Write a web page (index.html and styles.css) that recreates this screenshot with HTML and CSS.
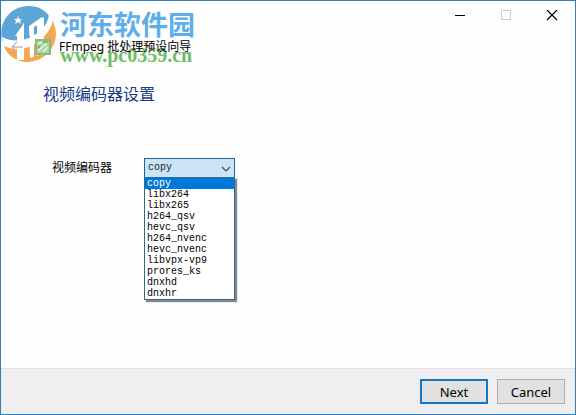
FILE: index.html
```html
<!DOCTYPE html>
<html lang="zh-CN">
<head>
<meta charset="utf-8">
<title>FFmpeg 批处理预设向导</title>
<link rel="stylesheet" href="styles.css">
</head>
<body>
<div class="window">
  <div class="watermark">
    <svg class="logo" viewBox="0 3 60 60" width="60" height="60" aria-hidden="true">
      <path fill="#5ba6d6" d="M2 41C-2 21 11 6 29 6c9 0 16 4 20 10 0 8-5 17-12 22-9 7-23 8-35 3z"/>
      <path fill="#f5a750" d="M4 46c13 5 29 2 39-9 6-6 8-11 9-17 6 10 5 22-2 31-6 7-14 11-24 11C15 61 7 55 4 46z"/>
      <path fill="#fff" d="M15 36l9-13v37h-7V46h-2zM29 26l13-9 2 1v34l-7 4V25l-3 2v30l-4 1z"/>
      <path fill="#5ba6d6" d="M15 36h15v6c-5 2-11 2-15 0z"/>
      <path fill="#fff" d="M17 36l7-13v19h-7zM2 37c14 7 29 3 40-8 4-4 6-9 7-14 3 1 4 4 3 9-4 10-13 20-26 24-9 2-17 1-23-3z"/>
      <path fill="#fff" d="M18 16l1 3h3l-2 2 1 3-3-2-3 2 1-3-2-2h3z"/>
    </svg>
    <div class="brand">
      <span class="brand-name">河东软件园</span>
      <span class="brand-url">www.pc0359.cn</span>
    </div>
  </div>
  <header class="titlebar">
    <div class="controls">
      <button class="control" type="button" aria-label="最小化"><svg width="12" height="12" viewBox="0 0 12 12"><path d="M1 5.500h10" stroke="#000"/></svg></button>
      <button class="control" type="button" aria-label="最大化" disabled><svg width="12" height="12" viewBox="0 0 12 12"><path d="M1.500 .5h9v9h-9z" fill="none" stroke="#ccc"/></svg></button>
      <button class="control" type="button" aria-label="关闭"><svg width="12" height="12" viewBox="0 0 12 12"><path d="M1 0l10 10M11 0L1 10" stroke="#000" stroke-width="1.200"/></svg></button>
    </div>
    <div class="caption">
      <button class="back" type="button" aria-label="返回" disabled><svg width="16" height="12" viewBox="0 0 16 12"><path d="M13 6H2M7 1L2 6l5 5" fill="none" stroke="#b9bcc0" stroke-width="1.300"/></svg></button>
      <svg class="app-icon" width="16" height="16" viewBox="0 0 16 16" aria-hidden="true"><path d="M1 1h14v14H1z" fill="#a9d5a4" stroke="#8fb878" stroke-width="2"/><path d="M3 5l4-2M3 12l9-8M8 13l5-5" stroke="#edf7e6" stroke-width="1.500"/><path d="M8 3h5M3 9l2-2" stroke="#62ad72" stroke-width="1.500"/></svg>
      <span class="caption-text">FFmpeg 批处理预设向导</span>
    </div>
  </header>
  <main class="page">
    <h1 class="heading">视频编码器设置</h1>
    <div class="field">
      <label class="label" for="codec">视频编码器</label>
      <div class="combo">
        <select class="select" id="codec">
          <option>copy</option><option>libx264</option><option>libx265</option><option>h264_qsv</option><option>hevc_qsv</option><option>h264_nvenc</option><option>hevc_nvenc</option><option>libvpx-vp9</option><option>prores_ks</option><option>dnxhd</option><option>dnxhr</option>
        </select>
        <svg class="chevron" width="10" height="6" viewBox="0 0 10 6" aria-hidden="true"><path d="M1 1l4 4 4-4" fill="none" stroke="#444f58" stroke-width="1.200"/></svg>
        <ul class="list" role="listbox" aria-label="视频编码器">
          <li class="item selected" role="option" aria-selected="true">copy</li>
          <li class="item" role="option">libx264</li>
          <li class="item" role="option">libx265</li>
          <li class="item" role="option">h264_qsv</li>
          <li class="item" role="option">hevc_qsv</li>
          <li class="item" role="option">h264_nvenc</li>
          <li class="item" role="option">hevc_nvenc</li>
          <li class="item" role="option">libvpx-vp9</li>
          <li class="item" role="option">prores_ks</li>
          <li class="item" role="option">dnxhd</li>
          <li class="item" role="option">dnxhr</li>
        </ul>
      </div>
    </div>
  </main>
  <footer class="footer">
    <button class="button primary" type="button">Next</button>
    <button class="button" type="button">Cancel</button>
  </footer>
</div>
</body>
</html>
```

FILE: styles.css
```css
* { box-sizing: border-box; }
body {
  margin: 0;
  background: #fff;
  color: #000;
  font-family: "Noto Sans", "Noto Sans CJK SC", sans-serif;
}
.window {
  position: relative;
  display: flex;
  flex-direction: column;
  min-height: 100vh;
  border: 1px solid #2d7fba;
  background: #fefefe;
}
button { font: inherit; color: inherit; }
.watermark {
  position: absolute;
  top: 2px;
  left: -1px;
  display: flex;
  pointer-events: none;
}
.brand { display: flex; flex-direction: column; white-space: nowrap; }
.brand-name {
  color: #5eafe9;
  font: 700 27px/42px "Noto Sans CJK SC", sans-serif;
}
.brand-url {
  color: #6cbd66;
  font: bold 20px/20px "Liberation Serif", serif;
}
.titlebar { display: flex; flex-direction: column; }
.controls { display: flex; justify-content: flex-end; }
.control {
  display: grid;
  place-items: center;
  width: 46px;
  height: 29px;
  padding: 0;
  border: 0;
  background: none;
}
.caption { position: relative; display: flex; align-items: center; height: 34px; padding-left: 9px; }
.back { display: flex; padding: 0; border: 0; background: none; }
.app-icon { margin-left: 9px; }
.caption-text { margin-left: 8px; font-size: 12px; line-height: 20px; }
.page { flex: 1; padding: 16px 42px; }
.heading {
  margin: 0;
  color: #173c85;
  font-size: 16px;
  font-weight: 400;
  line-height: 28px;
}
.field { display: flex; align-items: center; margin-top: 50px; padding-left: 9px; }
.label { width: 92px; font-size: 12px; line-height: 20px; }
.combo { position: relative; width: 91px; }
.select {
  display: block;
  width: 100%;
  height: 20px;
  padding: 0 3px;
  border: 1px solid #16669f;
  border-radius: 0;
  appearance: none;
  background: #cce4f7;
  color: #222;
  font: 10px/18px "Liberation Mono", monospace;
  outline: 0;
}
.chevron { position: absolute; top: 8px; right: 4px; pointer-events: none; }
.list {
  position: absolute;
  top: 19px;
  left: 0;
  width: 100%;
  margin: 0;
  padding: 0;
  border: 1px solid #286a9a;
  background: #fff;
  box-shadow: 2px 2px 1px #0007;
  list-style: none;
  font: 10px/11px "Liberation Mono", monospace;
}
.item { padding-left: 2px; }
.selected { background: #0078d7; color: #fff; }
.footer {
  display: flex;
  justify-content: flex-end;
  gap: 9px;
  padding: 10px;
  border-top: 1px solid #dfdfdf;
  background: #f0eef0;
}
.button {
  width: 68px;
  height: 25px;
  padding: 0;
  border: 1px solid #adadad;
  background: #e1e1e1;
  font-size: 13px;
  line-height: 20px;
}
.primary { border: 2px solid #1477c4; }
```
